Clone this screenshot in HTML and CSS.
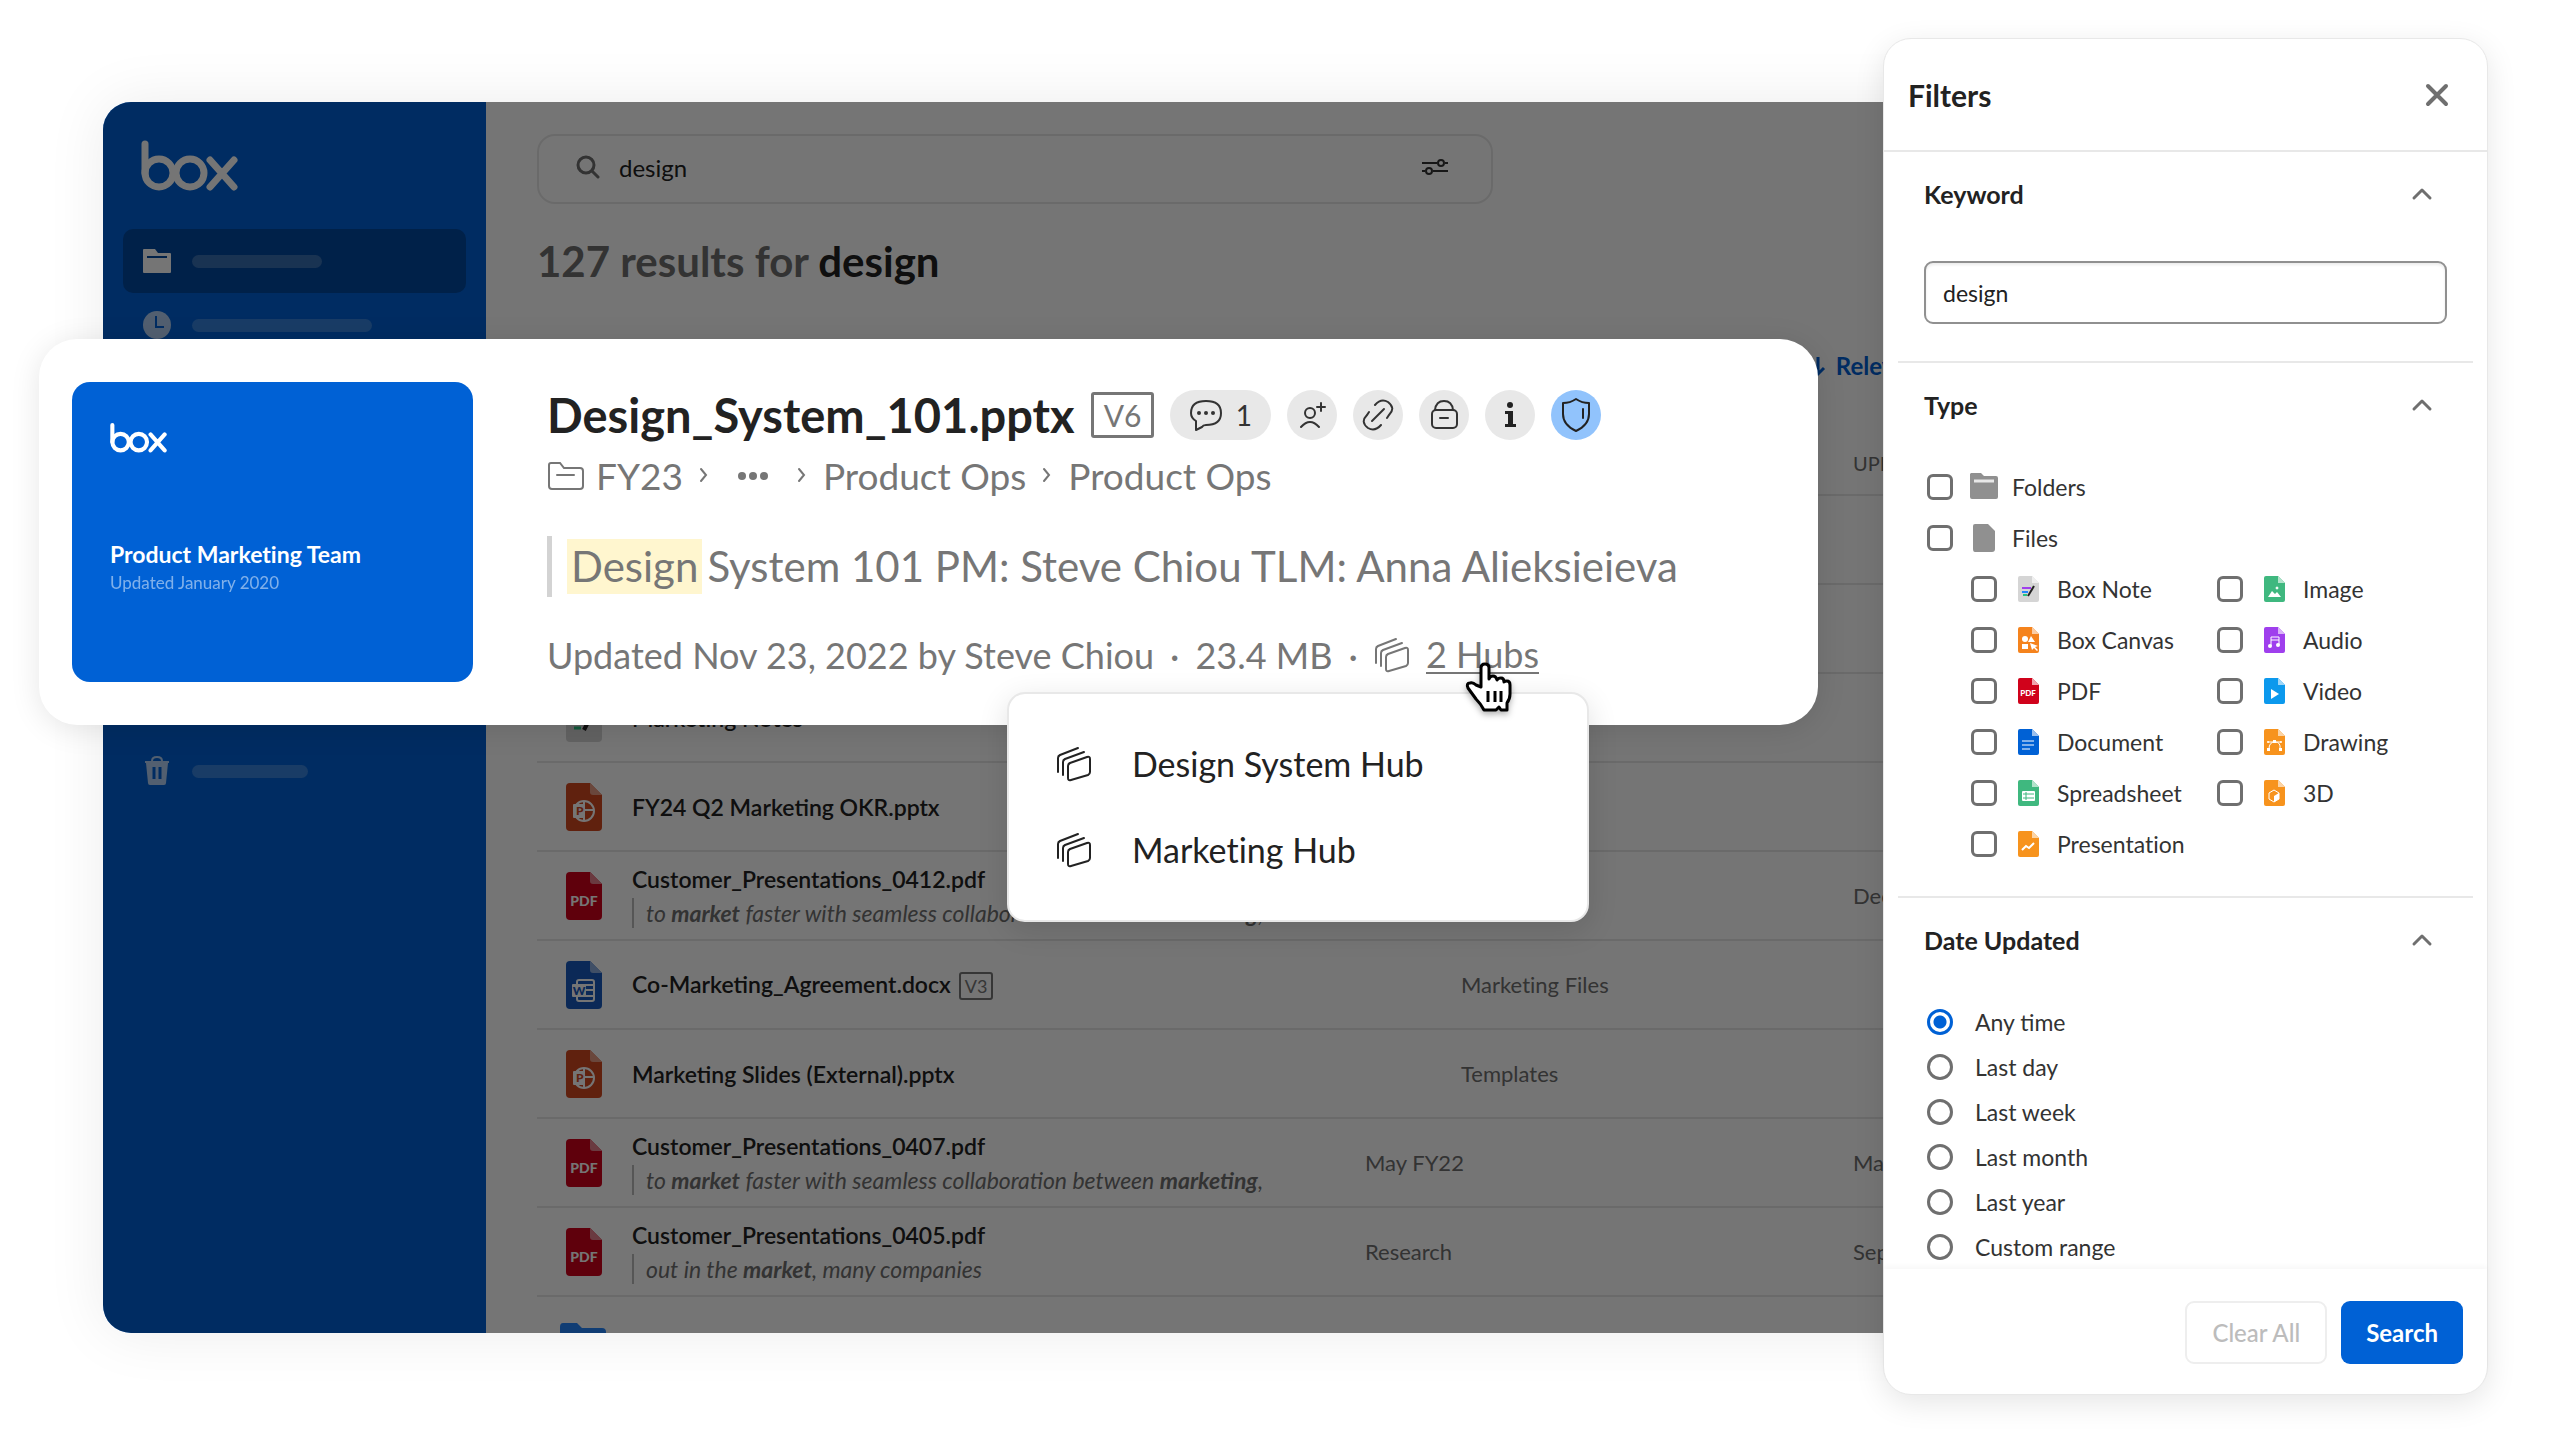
FILE: index.html
```html
<!DOCTYPE html>
<html lang="en">
<head>
    <meta charset="UTF-8">
    <meta name="viewport" content="width=device-width, initial-scale=1.0">
    <title>Box - Search results</title>
    <link rel="stylesheet" href="styles.css">
</head>
<body>

    <!-- Shared icons -->
    <svg class="sprite" aria-hidden="true">
        <symbol id="box-logo" viewBox="0 0 97 52">
            <g fill="none" stroke="currentColor" stroke-width="7" stroke-linecap="round">
                <path d="M4 4v29"/>
                <circle cx="18" cy="33" r="14"/>
                <circle cx="49" cy="33" r="14"/>
                <path d="M69 20l24 27M93 20L69 47"/>
            </g>
        </symbol>
        <symbol id="hubs" viewBox="0 0 36 36">
            <g fill="none" stroke="currentColor" stroke-width="2" stroke-linecap="round" stroke-linejoin="round">
                <path d="M2 26V12q0-2 2-3L22 2"/>
                <path d="M7 29V16q0-2 2-3L28 6"/>
                <path d="M12 20q0-2 2-3l17-6q3-1 3 2v13q0 2-2 3l-17 5q-3 1-3-2z"/>
            </g>
        </symbol>
        <symbol id="chevron-up" viewBox="0 0 22 14">
            <path d="M3 11l8-8 8 8" fill="none" stroke="#6f6f6f" stroke-width="3" stroke-linecap="round" stroke-linejoin="round"/>
        </symbol>
        <symbol id="chevron-right" viewBox="0 0 10 18">
            <path d="M2 2l5 6-5 6" fill="none" stroke="currentColor" stroke-width="2" stroke-linecap="round"/>
        </symbol>
        <symbol id="file-pptx" viewBox="0 0 36 48">
            <path d="M4 0h20l12 12v32q0 4-4 4H4q-4 0-4-4V4q0-4 4-4z" fill="#d1481f"/>
            <path d="M24 0l12 12h-9q-3 0-3-3z" fill="#e79b84"/>
            <circle cx="18" cy="28" r="10" fill="none" stroke="#fff" stroke-width="2"/>
            <path d="M18 18v20M18 27h10" stroke="#fff" stroke-width="2"/>
            <rect x="7" y="21" width="12" height="14" rx="1" fill="#fff"/>
            <text x="10" y="32" class="file-letter" fill="#d1481f">P</text>
        </symbol>
        <symbol id="file-pdf" viewBox="0 0 36 48">
            <path d="M4 0h20l12 12v32q0 4-4 4H4q-4 0-4-4V4q0-4 4-4z" fill="#d0021b"/>
            <path d="M24 0l12 12h-9q-3 0-3-3z" fill="#e67f8c"/>
            <text x="18" y="34" class="file-pdf-text" fill="#fff" text-anchor="middle">PDF</text>
        </symbol>
        <symbol id="file-docx" viewBox="0 0 36 48">
            <path d="M4 0h20l12 12v32q0 4-4 4H4q-4 0-4-4V4q0-4 4-4z" fill="#185abd"/>
            <path d="M24 0l12 12h-9q-3 0-3-3z" fill="#8bacde"/>
            <rect x="11" y="19" width="17" height="21" rx="2" fill="none" stroke="#fff" stroke-width="2"/>
            <path d="M11 24h17M11 29h17M11 35h17" stroke="#fff" stroke-width="2"/>
            <rect x="6" y="23" width="14" height="13" rx="1" fill="#fff"/>
            <text x="13" y="34" class="file-letter" fill="#185abd" text-anchor="middle">W</text>
        </symbol>
        <symbol id="file-note" viewBox="0 0 36 48">
            <path d="M4 0h20l12 12v32q0 4-4 4H4q-4 0-4-4V4q0-4 4-4z" fill="#d5d5d5"/>
            <path d="M24 0l12 12h-9q-3 0-3-3z" fill="#efefef"/>
            <path d="M8 22h14" stroke="#9f3fed" stroke-width="3"/>
            <path d="M8 28h10" stroke="#2486fc" stroke-width="3"/>
            <path d="M8 34h7" stroke="#26c281" stroke-width="3"/>
            <path d="M27 18l-9 18" stroke="#222" stroke-width="4"/>
        </symbol>
    </svg>

    <div class="stage">
        <div class="workspace">

            <!-- Dimmed application window -->
            <div class="app">
                <nav class="sidebar" aria-label="Main">
                    <svg class="sidebar-logo" role="img" aria-label="Box"><use href="#box-logo"/></svg>
                    <a class="nav-item active" href="#" aria-label="Files">
                        <svg viewBox="0 0 30 26"><path d="M2 1h11l3 4h12q1 0 1 1v18q0 1-1 1H2q-1 0-1-1V2q0-1 1-1z" fill="currentColor"/><path d="M5 9h20" stroke="#00489f" stroke-width="2"/></svg>
                        <span class="nav-bar"></span>
                    </a>
                    <a class="nav-item" href="#" aria-label="Recents">
                        <svg viewBox="0 0 30 30"><circle cx="15" cy="15" r="14" fill="currentColor"/><path d="M14 6v11h8" fill="none" stroke="#0061d5" stroke-width="2"/></svg>
                        <span class="nav-bar long"></span>
                    </a>
                    <a class="nav-item trash" href="#" aria-label="Trash">
                        <svg viewBox="0 0 26 30"><path d="M8 5q0-4 5-4t5 4" fill="none" stroke="currentColor" stroke-width="2"/><path d="M1 5h24v2h-1l-2 20q0 2-2 2H6q-2 0-2-2L2 7H1z" fill="currentColor"/><path d="M10 11v12M16 11v12" stroke="#0061d5" stroke-width="3"/></svg>
                        <span class="nav-bar short"></span>
                    </a>
                </nav>

                <main class="results">
                    <label class="search">
                        <svg class="search-icon" viewBox="0 0 24 24"><circle cx="10" cy="10" r="8" fill="none" stroke="#6f6f6f" stroke-width="3"/><path d="M16 16l6 6" stroke="#6f6f6f" stroke-width="3" stroke-linecap="round"/></svg>
                        <input type="text" value="design" aria-label="Search">
                        <svg class="tune-icon" viewBox="0 0 28 18"><path d="M1 5h15M24 5h3M1 13h3M12 13h15" stroke="#333" stroke-width="2"/><circle cx="20" cy="5" r="3" fill="none" stroke="#333" stroke-width="2"/><circle cx="8" cy="13" r="3" fill="none" stroke="#333" stroke-width="2"/></svg>
                    </label>

                    <h1><span>127 results for</span> design</h1>

                    <div class="sort">
                        <button type="button">
                            <svg viewBox="0 0 16 22"><path d="M8 2v17M2 13l6 6 6-6" fill="none" stroke="currentColor" stroke-width="3"/></svg>
                            Relevance
                        </button>
                    </div>

                    <div class="table-wrap">
                        <table>
                            <colgroup>
                                <col class="col-name">
                                <col class="col-location">
                                <col>
                            </colgroup>
                            <thead>
                                <tr><th>NAME</th><th>LOCATION</th><th>UPDATED</th></tr>
                            </thead>
                            <tbody>
                                <tr><td></td><td></td><td></td></tr>
                                <tr><td></td><td></td><td></td></tr>
                                <tr>
                                    <td><div class="file"><svg><use href="#file-note"/></svg><div><a href="#">Marketing Notes</a></div></div></td>
                                    <td></td><td></td>
                                </tr>
                                <tr>
                                    <td><div class="file"><svg><use href="#file-pptx"/></svg><div><a href="#">FY24 Q2 Marketing OKR.pptx</a></div></div></td>
                                    <td></td><td></td>
                                </tr>
                                <tr>
                                    <td><div class="file"><svg><use href="#file-pdf"/></svg><div><a href="#">Customer_Presentations_0412.pdf</a><p>to <b>market</b> faster with seamless collaboration between <b>marketing</b>,</p></div></div></td>
                                    <td></td><td>Dec 6, 2022</td>
                                </tr>
                                <tr>
                                    <td><div class="file"><svg><use href="#file-docx"/></svg><div><a href="#">Co-Marketing_Agreement.docx</a><span class="version">V3</span></div></div></td>
                                    <td class="indent">Marketing Files</td><td></td>
                                </tr>
                                <tr>
                                    <td><div class="file"><svg><use href="#file-pptx"/></svg><div><a href="#">Marketing Slides (External).pptx</a></div></div></td>
                                    <td class="indent">Templates</td><td></td>
                                </tr>
                                <tr>
                                    <td><div class="file"><svg><use href="#file-pdf"/></svg><div><a href="#">Customer_Presentations_0407.pdf</a><p>to <b>market</b> faster with seamless collaboration between <b>marketing</b>,</p></div></div></td>
                                    <td>May FY22</td><td>May 10, 2022</td>
                                </tr>
                                <tr>
                                    <td><div class="file"><svg><use href="#file-pdf"/></svg><div><a href="#">Customer_Presentations_0405.pdf</a><p>out in the <b>market</b>, many companies</p></div></div></td>
                                    <td>Research</td><td>Sep 8, 2022</td>
                                </tr>
                                <tr>
                                    <td><div class="file folder"><svg viewBox="0 0 48 40"><path d="M4 2h14l5 5h20q4 0 4 4v24q0 4-4 4H4q-3 0-3-4V6q0-4 3-4z" fill="#2486fc"/></svg></div></td>
                                    <td></td><td></td>
                                </tr>
                            </tbody>
                        </table>
                    </div>
                </main>
            </div>

            <!-- Highlighted search result -->
            <article class="card">
                <div class="thumb">
                    <svg role="img" aria-label="Box"><use href="#box-logo"/></svg>
                    <strong>Product Marketing Team</strong>
                    <small>Updated January 2020</small>
                </div>
                <div class="card-body">
                    <div class="card-title">
                        <h2>Design_System_101.pptx</h2>
                        <span class="version big">V6</span>
                        <div class="actions">
                            <button class="pill" type="button" aria-label="1 comment">
                                <svg viewBox="0 0 32 32"><path d="M6 31v-9Q1 19 1 14 1 2 16 2t15 12-15 12q-3 0-4 2z" fill="none" stroke="#333" stroke-width="2" stroke-linejoin="round"/><g fill="#333"><circle cx="9" cy="14" r="2"/><circle cx="16" cy="14" r="2"/><circle cx="23" cy="14" r="2"/></g></svg>
                                1
                            </button>
                            <button type="button" aria-label="Invite people">
                                <svg viewBox="0 0 32 32"><g fill="none" stroke="#333" stroke-width="2" stroke-linecap="round"><circle cx="14" cy="14" r="5"/><path d="M5 28q9-10 18 0M25 4v8M21 8h8"/></g></svg>
                            </button>
                            <button type="button" aria-label="Copy link">
                                <svg viewBox="0 0 32 32"><g fill="none" stroke="#333" stroke-width="2" stroke-linecap="round"><path d="M10 22L22 10"/><path d="M13 6q6-7 13-3 8 6 1 13l-2 3"/><path d="M19 26q-6 7-13 3-8-6-1-13l2-3"/></g></svg>
                            </button>
                            <button type="button" aria-label="Lock">
                                <svg viewBox="0 0 32 32"><g fill="none" stroke="#333" stroke-width="2" stroke-linecap="round"><rect x="4" y="11" width="25" height="18" rx="4"/><path d="M7 11q1-9 9-9t9 9M12 19h8"/></g></svg>
                            </button>
                            <button type="button" aria-label="Details">
                                <svg viewBox="0 0 32 32"><g fill="#222"><circle cx="16" cy="6" r="3"/><path d="M11 12h8v13h3v3H11v-3h3V15h-3z"/></g></svg>
                            </button>
                            <button class="shield" type="button" aria-label="Shield">
                                <svg viewBox="0 0 32 36"><path d="M16 2q6 4 13 4v11q0 11-13 17Q3 28 3 17V6q7 0 13-4z" fill="none" stroke="#222" stroke-width="2" stroke-linejoin="round"/><path d="M23 12v9" stroke="#222" stroke-width="2" stroke-linecap="round"/></svg>
                            </button>
                        </div>
                    </div>

                    <div class="crumbs">
                        <svg class="crumb-folder" viewBox="0 0 38 30"><path d="M4 2h9l4 5h16q3 0 3 3v15q0 3-3 3H5q-3 0-3-3V4q0-2 2-2zM10 14h17" fill="none" stroke="currentColor" stroke-width="2" stroke-linecap="round"/></svg>
                        <a href="#">FY23</a>
                        <svg class="crumb-sep"><use href="#chevron-right"/></svg>
                        <svg class="crumb-dots" viewBox="0 0 32 10"><g fill="currentColor"><circle cx="5" cy="5" r="4"/><circle cx="16" cy="5" r="4"/><circle cx="27" cy="5" r="4"/></g></svg>
                        <svg class="crumb-sep"><use href="#chevron-right"/></svg>
                        <a href="#">Product Ops</a>
                        <svg class="crumb-sep"><use href="#chevron-right"/></svg>
                        <a href="#">Product Ops</a>
                    </div>

                    <p class="excerpt"><mark>Design</mark>System 101 PM: Steve Chiou TLM: Anna Alieksieieva</p>

                    <div class="meta">
                        <span>Updated Nov 23, 2022 by Steve Chiou</span>
                        <span>·</span>
                        <span>23.4 MB</span>
                        <span>·</span>
                        <div class="hubs">
                            <svg><use href="#hubs"/></svg>
                            <a href="#">2 Hubs</a>
                            <svg class="cursor" viewBox="0 0 48 52"><path d="M17 26V7q0-4 4-4t4 4v11q1-3 4-3t4 4q1-2 4-2t3 4q1-1 3-1 3 0 3 4v9q0 5-3 9v7h-6l-2-3-3 3H20q-3-6-8-11L4 27q-2-5 2-5 3-1 6 2z" fill="#fff" stroke="#000" stroke-width="3" stroke-linejoin="round"/><path d="M24 30v11M31 30v11M37 30v11" stroke="#000" stroke-width="3"/></svg>
                            <div class="menu">
                                <a href="#"><svg><use href="#hubs"/></svg>Design System Hub</a>
                                <a href="#"><svg><use href="#hubs"/></svg>Marketing Hub</a>
                            </div>
                        </div>
                    </div>
                </div>
            </article>
        </div>

        <!-- Filters panel -->
        <form class="filters">
            <header>
                <h2>Filters</h2>
                <button type="button" aria-label="Close"><svg viewBox="0 0 24 24"><path d="M3 3l18 18M21 3L3 21" stroke="#6f6f6f" stroke-width="4" stroke-linecap="round"/></svg></button>
            </header>

            <section>
                <h3><label for="keyword">Keyword</label> <svg><use href="#chevron-up"/></svg></h3>
                <input class="keyword" id="keyword" type="text" value="design">
            </section>

            <section>
                <h3>Type <svg><use href="#chevron-up"/></svg></h3>
                <div class="types">
                    <label class="check"><input type="checkbox"><svg class="top-icon" viewBox="0 0 30 30"><path d="M2 1h10l3 3h12q2 0 2 2v19q0 2-2 2H3q-2 0-2-2V2z" fill="#909090"/><path d="M5 9h20" stroke="#e8e8e8" stroke-width="3"/></svg>Folders</label>
                    <label class="check"><input type="checkbox"><svg class="top-icon" viewBox="0 0 30 30"><path d="M6 1h13l7 7v18q0 3-3 3H6q-2 0-2-3V3q0-2 2-2z" fill="#909090"/></svg>Files</label>
                    <div class="file-types">
                        <label class="check"><input type="checkbox"><svg viewBox="0 0 21 26"><path d="M2 0h12l7 7v17q0 2-2 2H2q-2 0-2-2V2q0-2 2-2z" fill="#d5d5d5"/><path d="M14 0l7 7h-7z" fill="#efefef"/><path d="M4 12h9" stroke="#9f3fed" stroke-width="2"/><path d="M4 16h6" stroke="#2486fc" stroke-width="2"/><path d="M5 19h4" stroke="#26c281" stroke-width="2"/><path d="M16 10l-6 10" stroke="#222" stroke-width="2"/></svg>Box Note</label>
                        <label class="check"><input type="checkbox"><svg viewBox="0 0 21 26"><path d="M2 0h12l7 7v17q0 2-2 2H2q-2 0-2-2V2q0-2 2-2z" fill="#f5831d"/><path d="M14 0l7 7h-7z" fill="#fbcda5"/><g fill="#fff"><circle cx="7" cy="12" r="3"/><path d="M13 9l4 6h-7zM4 17h6v5H4zM12 16l8 3-3 1 3 3-1 1-3-3-2 2z"/></g></svg>Box Canvas</label>
                        <label class="check"><input type="checkbox"><svg viewBox="0 0 21 26"><path d="M2 0h12l7 7v17q0 2-2 2H2q-2 0-2-2V2q0-2 2-2z" fill="#d0021b"/><path d="M14 0l7 7h-7z" fill="#f1a6af"/><text x="10" y="18" class="mini-text" fill="#fff" text-anchor="middle">PDF</text></svg>PDF</label>
                        <label class="check"><input type="checkbox"><svg viewBox="0 0 21 26"><path d="M2 0h12l7 7v17q0 2-2 2H2q-2 0-2-2V2q0-2 2-2z" fill="#0061d5"/><path d="M14 0l7 7h-7z" fill="#99bfee"/><path d="M4 12h12M4 16h12M4 20h8" stroke="#fff" stroke-width="1"/></svg>Document</label>
                        <label class="check"><input type="checkbox"><svg viewBox="0 0 21 26"><path d="M2 0h12l7 7v17q0 2-2 2H2q-2 0-2-2V2q0-2 2-2z" fill="#3fb87f"/><path d="M14 0l7 7h-7z" fill="#b2e3cb"/><rect x="4" y="11" width="13" height="10" rx="1" fill="#fff"/><path d="M5 14h11M5 18h11M8 12v8" stroke="#3fb87f" stroke-width="1"/></svg>Spreadsheet</label>
                        <label class="check"><input type="checkbox"><svg viewBox="0 0 21 26"><path d="M2 0h12l7 7v17q0 2-2 2H2q-2 0-2-2V2q0-2 2-2z" fill="#f7931d"/><path d="M14 0l7 7h-7z" fill="#fcd4a5"/><path d="M4 19l4-4 3 2 5-5" fill="none" stroke="#fff" stroke-width="2"/></svg>Presentation</label>
                        <label class="check"><input type="checkbox"><svg viewBox="0 0 21 26"><path d="M2 0h12l7 7v17q0 2-2 2H2q-2 0-2-2V2q0-2 2-2z" fill="#3fb87f"/><path d="M14 0l7 7h-7z" fill="#b2e3cb"/><path d="M4 21l4-6 3 3 2-2 4 5z" fill="#fff"/><circle cx="13" cy="12" r="1" stroke="#fff" fill="#fff"/></svg>Image</label>
                        <label class="check"><input type="checkbox"><svg viewBox="0 0 21 26"><path d="M2 0h12l7 7v17q0 2-2 2H2q-2 0-2-2V2q0-2 2-2z" fill="#9f3fed"/><path d="M14 0l7 7h-7z" fill="#d9b2f8"/><path d="M7 19v-9h8v8M7 13h8" fill="none" stroke="#fff"/><g fill="#fff"><circle cx="6" cy="19" r="2"/><circle cx="14" cy="18" r="2"/></g></svg>Audio</label>
                        <label class="check"><input type="checkbox"><svg viewBox="0 0 21 26"><path d="M2 0h12l7 7v17q0 2-2 2H2q-2 0-2-2V2q0-2 2-2z" fill="#0c99ed"/><path d="M14 0l7 7h-7z" fill="#9ed6f8"/><path d="M7 11l8 5-8 5z" fill="#fff"/></svg>Video</label>
                        <label class="check"><input type="checkbox"><svg viewBox="0 0 21 26"><path d="M2 0h12l7 7v17q0 2-2 2H2q-2 0-2-2V2q0-2 2-2z" fill="#f7931d"/><path d="M14 0l7 7h-7z" fill="#fcd4a5"/><path d="M5 20q0-7 6-7t5 7M4 13h13" fill="none" stroke="#fff"/><g fill="#fff"><rect x="9" y="11" width="3" height="3"/><rect x="3" y="19" width="3" height="3"/><rect x="15" y="19" width="3" height="3"/><circle cx="4" cy="13" r="1"/><circle cx="17" cy="13" r="1"/></g></svg>Drawing</label>
                        <label class="check"><input type="checkbox"><svg viewBox="0 0 21 26"><path d="M2 0h12l7 7v17q0 2-2 2H2q-2 0-2-2V2q0-2 2-2z" fill="#f7931d"/><path d="M14 0l7 7h-7z" fill="#fcd4a5"/><path d="M10 10l5 3v6l-5 3-5-3v-6z" fill="none" stroke="#fff"/><path d="M10 16l5-3v6l-5 3z" fill="#fff"/></svg>3D</label>
                    </div>
                </div>
            </section>

            <section>
                <h3>Date Updated <svg><use href="#chevron-up"/></svg></h3>
                <div class="dates">
                    <label><input type="radio" name="date" checked>Any time</label>
                    <label><input type="radio" name="date">Last day</label>
                    <label><input type="radio" name="date">Last week</label>
                    <label><input type="radio" name="date">Last month</label>
                    <label><input type="radio" name="date">Last year</label>
                    <label><input type="radio" name="date">Custom range</label>
                </div>
            </section>

            <footer>
                <button class="clear" type="button" disabled>Clear All</button>
                <button class="submit" type="button">Search</button>
            </footer>
        </form>
    </div>

</body>
</html>
```
FILE: styles.css
```css
* {
    box-sizing: border-box;
}

body {
    margin: 0;
    background: #fff;
    color: #222;
    font-family: Lato, "Liberation Sans", sans-serif;
    font-size: 23px;
}

h1, h2, h3, p {
    margin: 0;
}

a {
    color: inherit;
    text-decoration: none;
}

button, input {
    font-family: inherit;
    color: inherit;
}

button {
    padding: 0;
    border: 0;
    background: none;
}

.sprite {
    display: none;
}

.stage {
    display: grid;
    grid-template-columns: minmax(0, 1fr) 605px;
    padding: 38px 64px 42px 103px;
    overflow: hidden;
}

.workspace {
    position: relative;
    display: flex;
    margin: 64px 0 62px;
}

/* Application window */
.app {
    position: relative;
    flex: 1;
    display: flex;
    margin-right: -200px;
    border-radius: 28px;
    overflow: hidden;
    box-shadow: 0 0 60px rgba(0, 0, 0, 0.08);
}

/* Dark layer over the whole window */
.app::after {
    content: "";
    position: absolute;
    inset: 0;
    background: rgba(0, 0, 0, 0.54);
}

.sidebar {
    flex: none;
    width: 383px;
    padding: 38px 20px;
    background: #0061d5;
    color: #fff;
}

.sidebar-logo {
    display: block;
    width: 97px;
    height: 52px;
    margin: 0 0 37px 18px;
}

.nav-item {
    display: flex;
    align-items: center;
    gap: 20px;
    height: 64px;
    padding: 0 19px;
    border-radius: 10px;
    color: rgba(255, 255, 255, 0.7);
}

.nav-item.active {
    background: #00489f;
    color: #fff;
}

.nav-item svg {
    width: 30px;
    height: 30px;
}

.nav-bar {
    width: 130px;
    height: 13px;
    border-radius: 7px;
    background: rgba(255, 255, 255, 0.22);
}

.nav-bar.long {
    width: 180px;
}

.nav-bar.short {
    width: 116px;
}

.nav-item.trash {
    margin-top: 382px;
}

.results {
    flex: 1;
    min-width: 0;
    display: flex;
    flex-direction: column;
    padding: 32px 0 0 51px;
    background: #fff;
}

.search {
    display: flex;
    align-items: center;
    gap: 19px;
    max-width: 956px;
    height: 70px;
    padding: 0 42px 4px 37px;
    border: 2px solid #e8e8e8;
    border-radius: 18px;
}

.search input {
    flex: 1;
    min-width: 0;
    padding: 0;
    border: 0;
    background: none;
    font-size: 24px;
}

.search-icon {
    width: 24px;
    height: 24px;
}

.tune-icon {
    width: 28px;
    height: 18px;
}

h1 {
    margin-top: 32px;
    font-size: 42px;
    line-height: 50px;
}

h1 span {
    color: #6f6f6f;
}

.sort {
    display: flex;
    justify-content: flex-end;
    margin: 64px 139px 0 0;
    color: #0061d5;
}

.sort button {
    display: flex;
    align-items: center;
    gap: 10px;
    font-size: 24px;
    font-weight: 700;
    line-height: 32px;
}

.sort svg {
    width: 16px;
    height: 22px;
}

/* Results table, cut off at the bottom of the window */
.table-wrap {
    flex: 1 1 0px;
    min-height: 0;
    overflow: hidden;
}

table {
    width: 100%;
    border-collapse: separate;
    border-spacing: 0;
    table-layout: fixed;
}

.col-name {
    width: 828px;
}

.col-location {
    width: 488px;
}

th, td {
    padding: 0;
    border-bottom: 2px solid #e8e8e8;
    text-align: left;
    font-weight: 400;
    color: #6f6f6f;
    white-space: nowrap;
}

th {
    height: 114px;
    padding-bottom: 18px;
    vertical-align: bottom;
    font-size: 20px;
    line-height: 26px;
}

td {
    height: 89px;
    font-size: 22px;
    font-variant-ligatures: none;
}

td.indent {
    padding-left: 96px;
}

.file {
    display: flex;
    align-items: center;
    gap: 30px;
    padding-left: 29px;
    font-size: 23px;
    line-height: 30px;
    font-variant-ligatures: normal;
}

.file svg {
    flex: none;
    width: 36px;
    height: 48px;
}

.file.folder {
    padding-left: 22px;
}

.file.folder svg {
    width: 48px;
    height: 40px;
}

.file a {
    color: #222;
    font-weight: 600;
}

.file p {
    margin-top: 4px;
    padding-left: 12px;
    border-left: 2px solid #bcbcbc;
    font-style: italic;
}

.file-letter {
    font-size: 12px;
    font-weight: 900;
}

.file-pdf-text {
    font-size: 14px;
    font-weight: 900;
}

.mini-text {
    font-size: 8px;
    font-weight: 900;
}

.version {
    display: inline-block;
    margin-left: 8px;
    padding: 0 4px;
    border: 2px solid #767676;
    border-radius: 3px;
    font-size: 18px;
    line-height: 24px;
    color: #767676;
}

/* Highlighted result */
.card {
    position: absolute;
    z-index: 1;
    top: 237px;
    left: -64px;
    right: 65px;
    display: flex;
    gap: 74px;
    padding: 43px 33px;
    border-radius: 38px;
    background: #fff;
    box-shadow: 0 4px 30px rgba(0, 0, 0, 0.1);
    color: #767676;
    font-size: 36px;
    font-variant-ligatures: none;
}

.thumb {
    flex: none;
    display: flex;
    flex-direction: column;
    width: 401px;
    height: 300px;
    padding: 40px 38px;
    border-radius: 18px;
    background: #0061d5;
    color: #fff;
}

.thumb svg {
    width: 57px;
    height: 32px;
    margin-bottom: 85px;
}

.thumb strong {
    font-size: 23px;
    line-height: 30px;
}

.thumb small {
    font-size: 17px;
    line-height: 28px;
    opacity: 0.5;
}

.card-body {
    flex: 1;
    min-width: 0;
    padding-top: 4px;
}

.card-title {
    display: flex;
    align-items: center;
    gap: 16px;
    height: 58px;
}

.card h2 {
    color: #222;
    font-size: 47px;
    line-height: 58px;
}

.version.big {
    margin: 0;
    padding: 0 10px;
    border-width: 3px;
    font-size: 30px;
    line-height: 40px;
}

.actions {
    display: flex;
    gap: 16px;
}

.actions button {
    display: flex;
    align-items: center;
    justify-content: center;
    width: 50px;
    height: 50px;
    border-radius: 25px;
    background: #e8e8e8;
    color: #333;
    font-size: 28px;
}

.actions button.pill {
    gap: 14px;
    width: 101px;
}

.actions svg {
    width: 32px;
    height: 32px;
}

.actions button.shield {
    background: #91c3fc;
}

.actions .shield svg {
    height: 36px;
}

.crumbs {
    display: flex;
    align-items: center;
    margin-top: 10px;
    font-size: 37px;
    line-height: 44px;
}

.crumb-folder {
    width: 38px;
    height: 30px;
    margin-right: 11px;
}

.crumb-sep {
    width: 10px;
    height: 18px;
    margin: 0 16px;
}

.crumb-dots {
    width: 32px;
    height: 10px;
    margin: 0 12px;
}

.excerpt {
    margin-top: 38px;
    padding: 3px 0 3px 15px;
    border-left: 5px solid #d3d3d3;
    font-size: 42px;
    line-height: 55px;
}

.excerpt mark {
    display: inline-block;
    margin-right: 5px;
    padding: 0 4px;
    background: #fff6cf;
    color: inherit;
}

.meta {
    display: flex;
    align-items: center;
    gap: 16px;
    margin-top: 36px;
    line-height: 44px;
}

.hubs {
    position: relative;
    display: flex;
    align-items: center;
    gap: 16px;
}

.hubs svg {
    flex: none;
    width: 36px;
    height: 36px;
}

.hubs > a {
    border-bottom: 2px solid #767676;
    line-height: 36px;
}

.hubs .cursor {
    position: absolute;
    z-index: 2;
    top: 25px;
    right: 27px;
    width: 48px;
    height: 52px;
    filter: drop-shadow(0 3px 3px rgba(0, 0, 0, 0.3));
}

.menu {
    position: absolute;
    top: 56px;
    right: -50px;
    width: 582px;
    padding: 27px 47px;
    border: 2px solid #e8e8e8;
    border-radius: 18px;
    background: #fff;
    box-shadow: 0 8px 30px rgba(0, 0, 0, 0.12);
    color: #222;
    font-size: 34px;
}

.menu a {
    display: flex;
    align-items: center;
    gap: 40px;
    height: 86px;
}

/* Filters panel */
.filters {
    position: relative;
    z-index: 2;
    border: 1px solid #e8e8e8;
    border-radius: 28px;
    background: #fff;
    box-shadow: 0 8px 30px rgba(0, 0, 0, 0.1);
}

.filters header {
    display: flex;
    align-items: center;
    justify-content: space-between;
    height: 113px;
    padding: 0 38px 0 24px;
    border-bottom: 2px solid #e8e8e8;
}

.filters h2 {
    font-size: 30px;
}

.filters header svg {
    display: block;
    width: 24px;
    height: 24px;
}

.filters section {
    margin: 0 14px;
    padding: 26px 26px 37px;
    border-bottom: 2px solid #e8e8e8;
}

.filters section:nth-of-type(2) {
    padding-bottom: 27px;
}

.filters section:last-of-type {
    padding-bottom: 0;
    border: 0;
}

.filters h3 {
    display: flex;
    align-items: center;
    justify-content: space-between;
    padding-right: 14px;
    font-size: 25px;
    line-height: 32px;
}

.filters h3 svg {
    width: 22px;
    height: 14px;
}

.keyword {
    display: block;
    width: 100%;
    height: 63px;
    margin-top: 51px;
    padding: 0 17px;
    border: 2px solid #909090;
    border-radius: 9px;
    box-shadow: inset 0 2px 3px rgba(0, 0, 0, 0.08);
    font-size: 23px;
}

.types {
    margin-top: 40px;
    padding-left: 3px;
    color: #333;
    font-variant-ligatures: none;
}

.file-types {
    display: grid;
    grid-template: repeat(6, auto) / 246px auto;
    grid-auto-flow: column;
    justify-content: start;
    padding-left: 44px;
}

.check {
    display: flex;
    align-items: center;
    height: 51px;
    white-space: nowrap;
}

.check svg {
    width: 21px;
    height: 26px;
    margin: 0 18px 0 21px;
}

.check .top-icon {
    width: 30px;
    height: 30px;
    margin: 0 13px 0 16px;
}

.filters input[type="checkbox"],
.filters input[type="radio"] {
    flex: none;
    appearance: none;
    width: 26px;
    height: 26px;
    margin: 0;
    border: 3px solid #6f6f6f;
    border-radius: 6px;
    background: #fff;
}

.filters input[type="radio"] {
    margin-right: 22px;
    border-radius: 50%;
}

.filters input[type="radio"]:checked {
    border-color: #0061d5;
    background: radial-gradient(#0061d5 6px, #fff 7px);
}

.dates {
    margin-top: 43px;
    padding-left: 3px;
    color: #333;
}

.dates label {
    display: flex;
    align-items: center;
    height: 45px;
}

.filters footer {
    display: flex;
    justify-content: flex-end;
    gap: 14px;
    padding: 32px 24px 30px;
    border-radius: 0 0 28px 28px;
    box-shadow: 0 -3px 5px rgba(0, 0, 0, 0.03);
}

.filters footer button {
    height: 63px;
    padding: 0 25px;
    border-radius: 9px;
    background: #0061d5;
    color: #fff;
    font-size: 24px;
    font-weight: 700;
}

.filters footer .clear {
    border: 2px solid #eee;
    background: #fff;
    color: #bcbcbc;
    font-weight: 500;
}
```
